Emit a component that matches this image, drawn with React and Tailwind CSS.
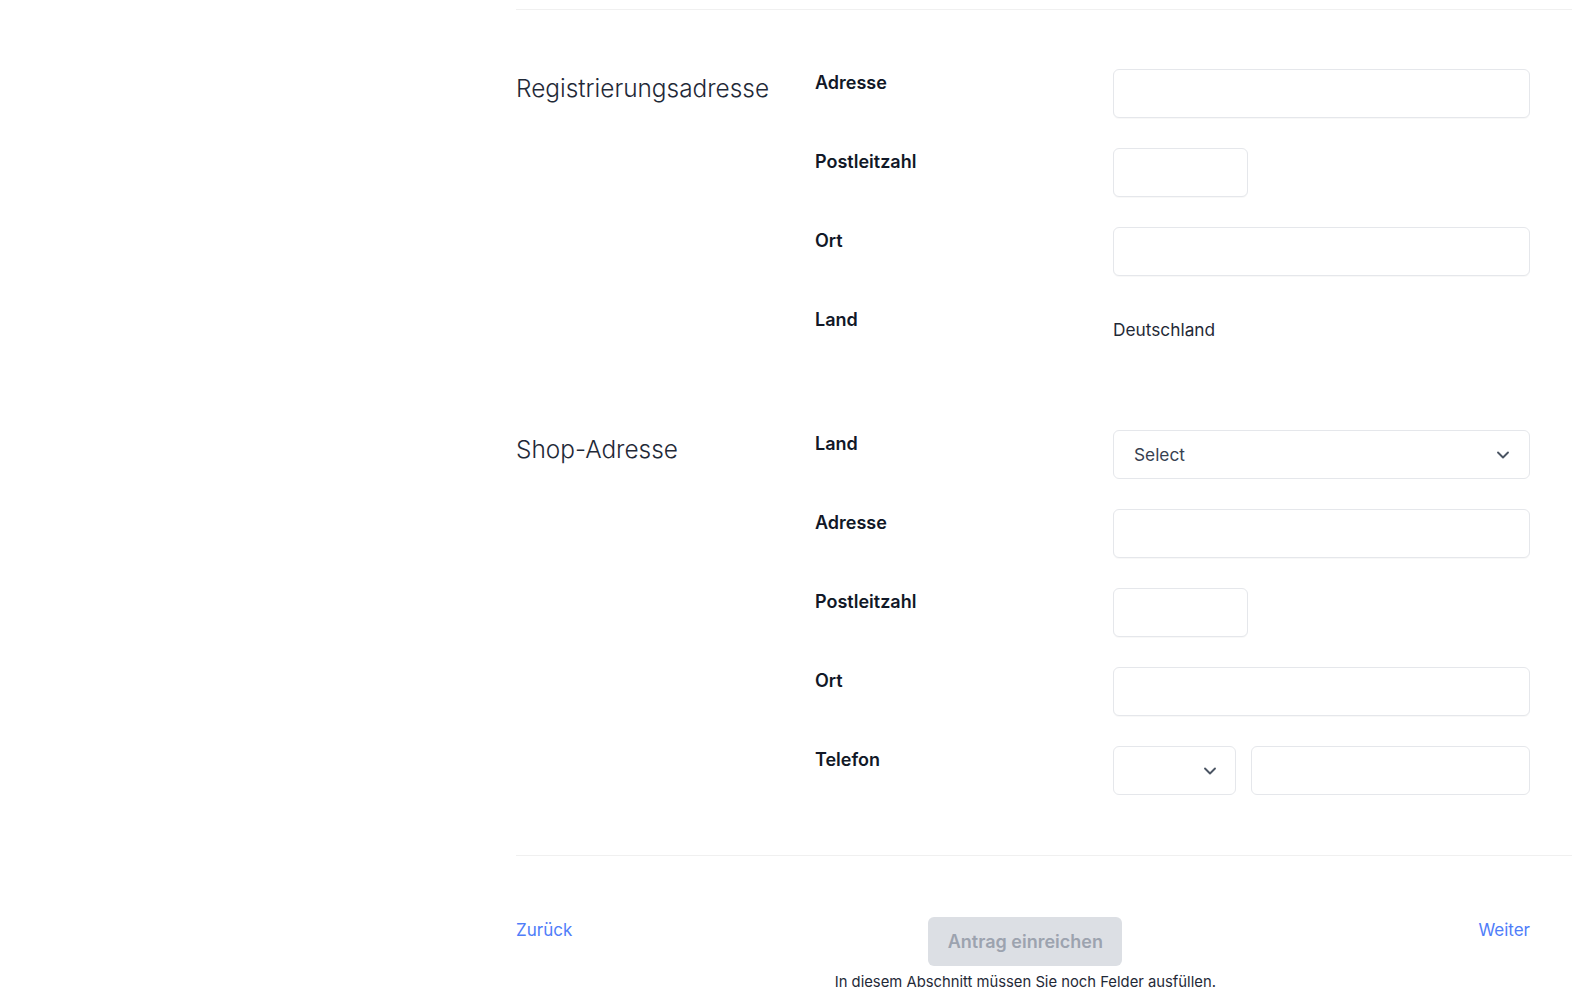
import { ChevronDown } from "lucide-react";

const font = { fontFamily: "Inter, 'Noto Sans', sans-serif" };

const TextInput = ({ w = "w-full" }) => (
  <div className={`${w} h-[49px] rounded-md border border-[#e5e7eb] bg-white shadow-[0_1px_1px_rgba(0,0,0,0.03)]`} />
);

const Row = ({ label, children }) => (
  <div className="flex min-h-[49px]">
    <div className="w-[298px] shrink-0 pt-[2px] text-[18px] font-semibold leading-6 text-[#111827]">{label}</div>
    <div className="flex-1">{children}</div>
  </div>
);

const Section = ({ title, children, className = "" }) => (
  <div className={`flex ${className}`}>
    <div className="w-[299px] shrink-0 pt-[1px] text-[24.4px] font-light leading-9 text-[#1f2937]">{title}</div>
    <div className="flex flex-1 flex-col gap-[30px]">{children}</div>
  </div>
);

export default function App() {
  return (
    <div className="h-[998px] overflow-hidden bg-white" style={font}>
      <div className="ml-[516px]">
        <div className="h-[10px] border-b border-[#f0f0f0]" />
        <div className="pr-[42px]">
          <Section title="Registrierungsadresse" className="pt-[59px]">
            <Row label="Adresse">
              <TextInput />
            </Row>
            <Row label="Postleitzahl">
              <TextInput w="w-[135px]" />
            </Row>
            <Row label="Ort">
              <TextInput />
            </Row>
            <Row label="Land">
              <div className="pt-[12px] text-[17.3px] leading-6 text-[#1f2937]">Deutschland</div>
            </Row>
          </Section>

          <Section title="Shop-Adresse" className="pt-[75px] pb-[60px]">
            <Row label="Land">
              <div className="flex h-[49px] w-full items-center justify-between rounded-md border border-[#e5e7eb] bg-white pl-5 pr-4">
                <span className="text-[17.3px] text-[#374151]">Select</span>
                <ChevronDown className="h-5 w-5 text-[#4b5563]" strokeWidth={2.25} />
              </div>
            </Row>
            <Row label="Adresse">
              <TextInput />
            </Row>
            <Row label="Postleitzahl">
              <TextInput w="w-[135px]" />
            </Row>
            <Row label="Ort">
              <TextInput />
            </Row>
            <Row label="Telefon">
              <div className="flex gap-[15px]">
                <div className="flex h-[49px] w-[123px] items-center justify-end rounded-md border border-[#e5e7eb] bg-white pr-[15px]">
                  <ChevronDown className="h-5 w-5 text-[#4b5563]" strokeWidth={2.25} />
                </div>
                <div className="h-[49px] flex-1 rounded-md border border-[#e5e7eb] bg-white" />
              </div>
            </Row>
          </Section>
        </div>
        <div className="border-b border-[#f0f0f0]" />
        <div className="pr-[42px] pt-[61px]">
          <div className="flex items-start justify-between">
            <a className="mt-[1px] text-[17px] leading-6 text-[#4f7df9]">Zurück</a>
            <div className="flex flex-col items-center">
              <button className="h-[49px] w-[194px] rounded-md bg-[#dcdfe4] text-[18px] font-semibold text-[#9ca3af]">
                Antrag einreichen
              </button>
              <p className="mt-[6px] text-[14.8px] leading-5 text-[#1f2937]">
                In diesem Abschnitt müssen Sie noch Felder ausfüllen.
              </p>
            </div>
            <a className="mt-[1px] text-[17px] leading-6 text-[#4f7df9]">Weiter</a>
          </div>
        </div>
      </div>
    </div>
  );
}
